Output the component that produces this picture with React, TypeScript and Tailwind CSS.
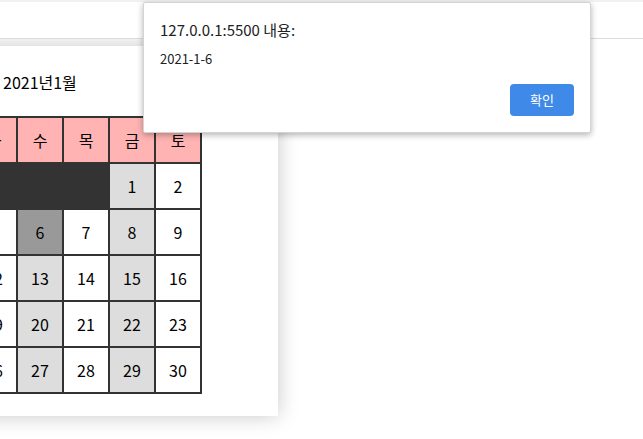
import React from "react";

const headers = ["일", "월", "화", "수", "목", "금", "토"];

type Cell = { n?: number; dark?: boolean };

function buildCells(): Cell[] {
  const cells: Cell[] = [];
  for (let i = 0; i < 5; i++) cells.push({ dark: true });
  for (let d = 1; d <= 31; d++) cells.push({ n: d });
  while (cells.length < 42) cells.push({ dark: true });
  return cells.slice(0, 35);
}

export default function App() {
  const cells = buildCells();
  return (
    <div className="relative w-[643px] h-[439px] overflow-hidden bg-white font-['Noto_Sans_CJK_KR','Noto_Sans',sans-serif] text-black">
      <div className="relative z-10 bg-white">
        <div className="h-[2px] bg-[#f1f1f1]" />
        <div className="h-[37px] border-b border-[#dcdcdc]" />
      </div>
      <div className="mt-[7px] ml-[-150px] w-[428px] h-[370px] bg-white shadow-[0_0_20px_rgba(0,0,0,0.22)]">
        <div className="pl-[153px] pt-[24px] h-[70px] text-[16px] leading-[24px]">2021년1월</div>
        <div className="ml-[28px] grid grid-cols-[repeat(7,44px)] auto-rows-[44px] gap-[2px] p-[2px] bg-[#333333] w-[324px]">
          {headers.map((h) => (
            <div key={h} className="flex items-center justify-center bg-[#ffb3b3] text-[16px]">
              {h}
            </div>
          ))}
          {cells.map((c, i) => {
            const col = i % 7;
            if (c.dark || c.n === undefined) {
              return <div key={i} className="bg-[#333333]" />;
            }
            let bg = "bg-white";
            if (col === 3 || col === 5 || col === 1) bg = "bg-[#dddddd]";
            if (c.n === 6) bg = "bg-[#999999]";
            return (
              <div key={i} className={`flex items-center justify-center text-[16px] ${bg}`}>
                {c.n}
              </div>
            );
          })}
        </div>
      </div>

      <div className="absolute z-20 left-[143px] top-[2px] w-[448px] h-[131px] bg-white border border-[#d4d4d4] rounded-[2px] shadow-[0_2px_6px_rgba(0,0,0,0.3)] flex flex-col px-[16px] pt-[16px] pb-[16px]">
        <div className="text-[15px] leading-[22px] text-[#202124]">127.0.0.1:5500 내용:</div>
        <div className="mt-[9px] text-[13px] leading-[18px] text-[#202124]">2021-1-6</div>
        <div className="mt-auto flex justify-end">
          <button className="w-[64px] h-[32px] rounded-[4px] bg-[#3f8ae9] text-white text-[13px] flex items-center justify-center">
            확인
          </button>
        </div>
      </div>
    </div>
  );
}
